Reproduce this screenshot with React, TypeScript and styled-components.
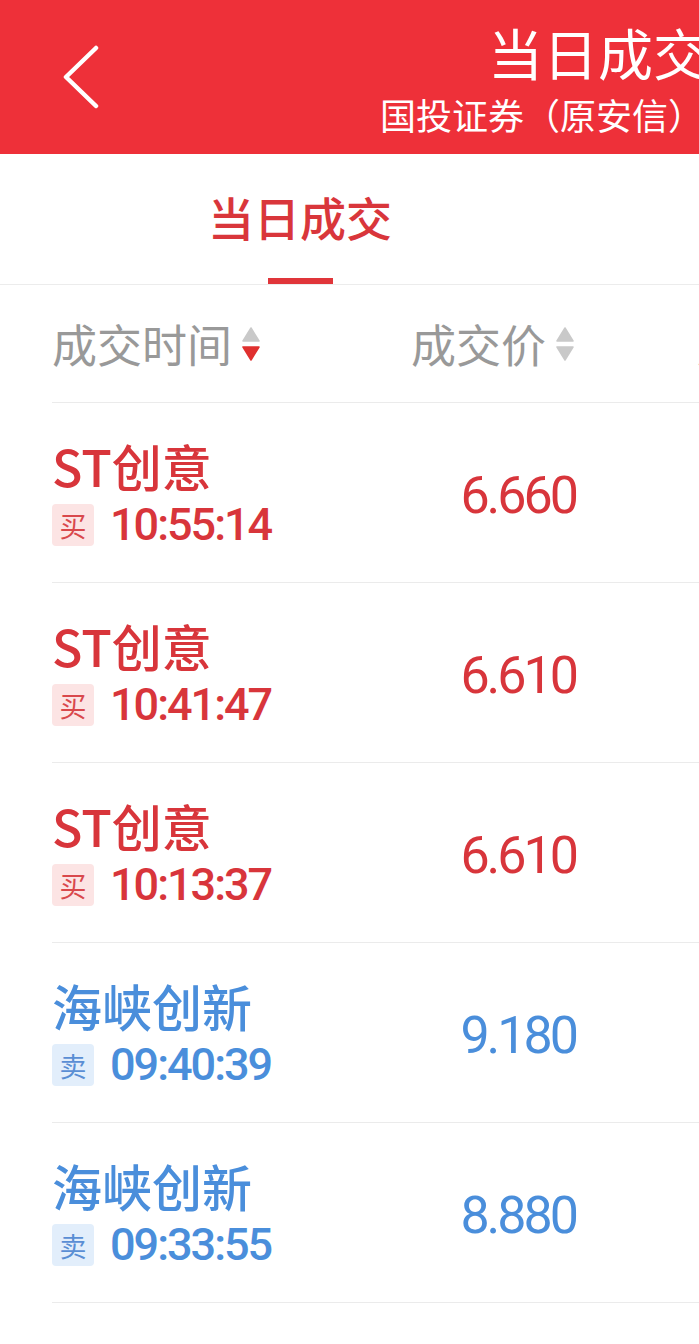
import React from 'react';
import styled, { createGlobalStyle } from 'styled-components';

const GlobalStyle = createGlobalStyle`
  html, body {
    margin: 0;
    padding: 0;
    overflow: hidden;
    background: #fff;
  }
  body {
    font-family: "Noto Sans CJK SC", "Noto Sans", sans-serif;
  }
`;

type Side = 'buy' | 'sell';

const colors = {
  buy: { text: '#d8353b', tagBg: '#fce4e4', tagText: '#d9484c' },
  sell: { text: '#4a8edb', tagBg: '#e2eefb', tagText: '#5a8ed4' },
};

const Page = styled.div`
  width: 1200px;
  min-height: 1344px;
  background: #fff;
`;

const Header = styled.header`
  display: flex;
  align-items: center;
  height: 154px;
  background: #ee3039;
  color: #fff;
`;

const BackButton = styled.button`
  flex: none;
  width: 380px;
  height: 100%;
  padding: 0 0 0 62px;
  border: 0;
  background: transparent;
  display: flex;
  align-items: center;
  cursor: pointer;
`;

const TitleBlock = styled.div`
  display: flex;
  flex-direction: column;
  gap: 13px;
`;

const Title = styled.h1`
  margin: 0 0 0 108px;
  font-size: 55px;
  line-height: 60px;
  font-weight: 400;
  white-space: nowrap;
`;

const Subtitle = styled.div`
  font-size: 36px;
  line-height: 40px;
  white-space: nowrap;
`;

const TabBar = styled.nav`
  display: flex;
  height: 130px;
  border-bottom: 1px solid #ececec;
`;

const Tab = styled.div<{ $active?: boolean }>`
  width: 600px;
  display: flex;
  flex-direction: column;
  align-items: center;
  padding-top: 34px;
  box-sizing: border-box;
  font-size: 46px;
  line-height: 56px;
  font-weight: 500;
  color: ${(p) => (p.$active ? '#d9363b' : '#333')};
  &::after {
    content: "";
    margin-top: auto;
    width: 65px;
    height: 6px;
    background: ${(p) => (p.$active ? '#e0353a' : 'transparent')};
  }
`;

const Table = styled.div`
  padding-left: 52px;
`;

const HeadRow = styled.div`
  display: grid;
  grid-template-columns: 300px 226px 400px;
  align-items: center;
  height: 117px;
  border-bottom: 1px solid #ebebeb;
`;

const HeadCell = styled.div<{ $align?: 'left' | 'right'; $indent?: number }>`
  display: flex;
  align-items: center;
  justify-content: ${(p) => (p.$align === 'right' ? 'flex-end' : 'flex-start')};
  gap: 9px;
  padding-left: ${(p) => p.$indent || 0}px;
  padding-right: ${(p) => (p.$align === 'right' ? 3 : 0)}px;
  font-size: 45px;
  line-height: 52px;
  color: #999;
  white-space: nowrap;
`;

const Row = styled.div`
  display: grid;
  grid-template-columns: 300px 226px 400px;
  align-items: center;
  height: 179px;
  border-bottom: 1px solid #ebebeb;
`;

const NameCell = styled.div`
  display: flex;
  flex-direction: column;
  gap: 9px;
`;

const Name = styled.div<{ $side: Side }>`
  font-size: 50px;
  line-height: 56px;
  font-weight: 500;
  color: ${(p) => colors[p.$side].text};
  white-space: nowrap;
`;

const Meta = styled.div`
  display: flex;
  align-items: center;
  gap: 16px;
`;

const Tag = styled.span<{ $side: Side }>`
  width: 42px;
  height: 42px;
  border-radius: 4px;
  display: flex;
  align-items: center;
  justify-content: center;
  font-size: 27px;
  background: ${(p) => colors[p.$side].tagBg};
  color: ${(p) => colors[p.$side].tagText};
`;

const Time = styled.span<{ $side: Side }>`
  font-family: Roboto, "Liberation Sans", sans-serif;
  font-weight: 500;
  font-size: 45px;
  line-height: 46px;
  letter-spacing: -2px;
  color: ${(p) => colors[p.$side].text};
`;

const Price = styled.div<{ $side: Side }>`
  text-align: right;
  font-family: Roboto, "Liberation Sans", sans-serif;
  font-weight: 400;
  font-size: 52px;
  letter-spacing: -3px;
  padding: 6px 2px 0 0;
  color: ${(p) => colors[p.$side].text};
`;

const ChevronLeft = () => (
  <svg width="40" height="64" viewBox="0 0 40 64">
    <polyline points="34,3 4,32 34,61" fill="none" stroke="#fff" strokeWidth="4.5" strokeLinecap="round" strokeLinejoin="round" />
  </svg>
);

const SortIcon = ({ active }: { active?: 'up' | 'down' }) => {
  const up = active === 'up' ? '#e0302f' : '#c9c9c9';
  const down = active === 'down' ? '#e0302f' : '#c9c9c9';
  return (
    <svg width="20" height="36" viewBox="0 0 20 36">
      <polygon points="2,15 10,2 18,15" fill={up} stroke={up} strokeWidth="1.5" strokeLinejoin="round" />
      <polygon points="2,21 18,21 10,34" fill={down} stroke={down} strokeWidth="1.5" strokeLinejoin="round" />
    </svg>
  );
};

const trades: { name: string; side: Side; time: string; price: string }[] = [
  { name: 'ST创意', side: 'buy', time: '10:55:14', price: '6.660' },
  { name: 'ST创意', side: 'buy', time: '10:41:47', price: '6.610' },
  { name: 'ST创意', side: 'buy', time: '10:13:37', price: '6.610' },
  { name: '海峡创新', side: 'sell', time: '09:40:39', price: '9.180' },
  { name: '海峡创新', side: 'sell', time: '09:33:55', price: '8.880' },
];

const App = () => {
  return (
    <Page>
      <GlobalStyle />
      <Header>
        <BackButton aria-label="返回">
          <ChevronLeft />
        </BackButton>
        <TitleBlock>
          <Title>当日成交</Title>
          <Subtitle>国投证券（原安信）</Subtitle>
        </TitleBlock>
      </Header>
      <TabBar>
        <Tab $active>当日成交</Tab>
      </TabBar>
      <Table>
        <HeadRow>
          <HeadCell>
            成交时间
            <SortIcon active="down" />
          </HeadCell>
          <HeadCell $align="right">
            成交价
            <SortIcon />
          </HeadCell>
          <HeadCell $indent={119}>成交量</HeadCell>
        </HeadRow>
        {trades.map((t, i) => (
          <Row key={i}>
            <NameCell>
              <Name $side={t.side}>{t.name}</Name>
              <Meta>
                <Tag $side={t.side}>{t.side === 'buy' ? '买' : '卖'}</Tag>
                <Time $side={t.side}>{t.time}</Time>
              </Meta>
            </NameCell>
            <Price $side={t.side}>{t.price}</Price>
            <div />
          </Row>
        ))}
      </Table>
    </Page>
  );
};

export default App;
